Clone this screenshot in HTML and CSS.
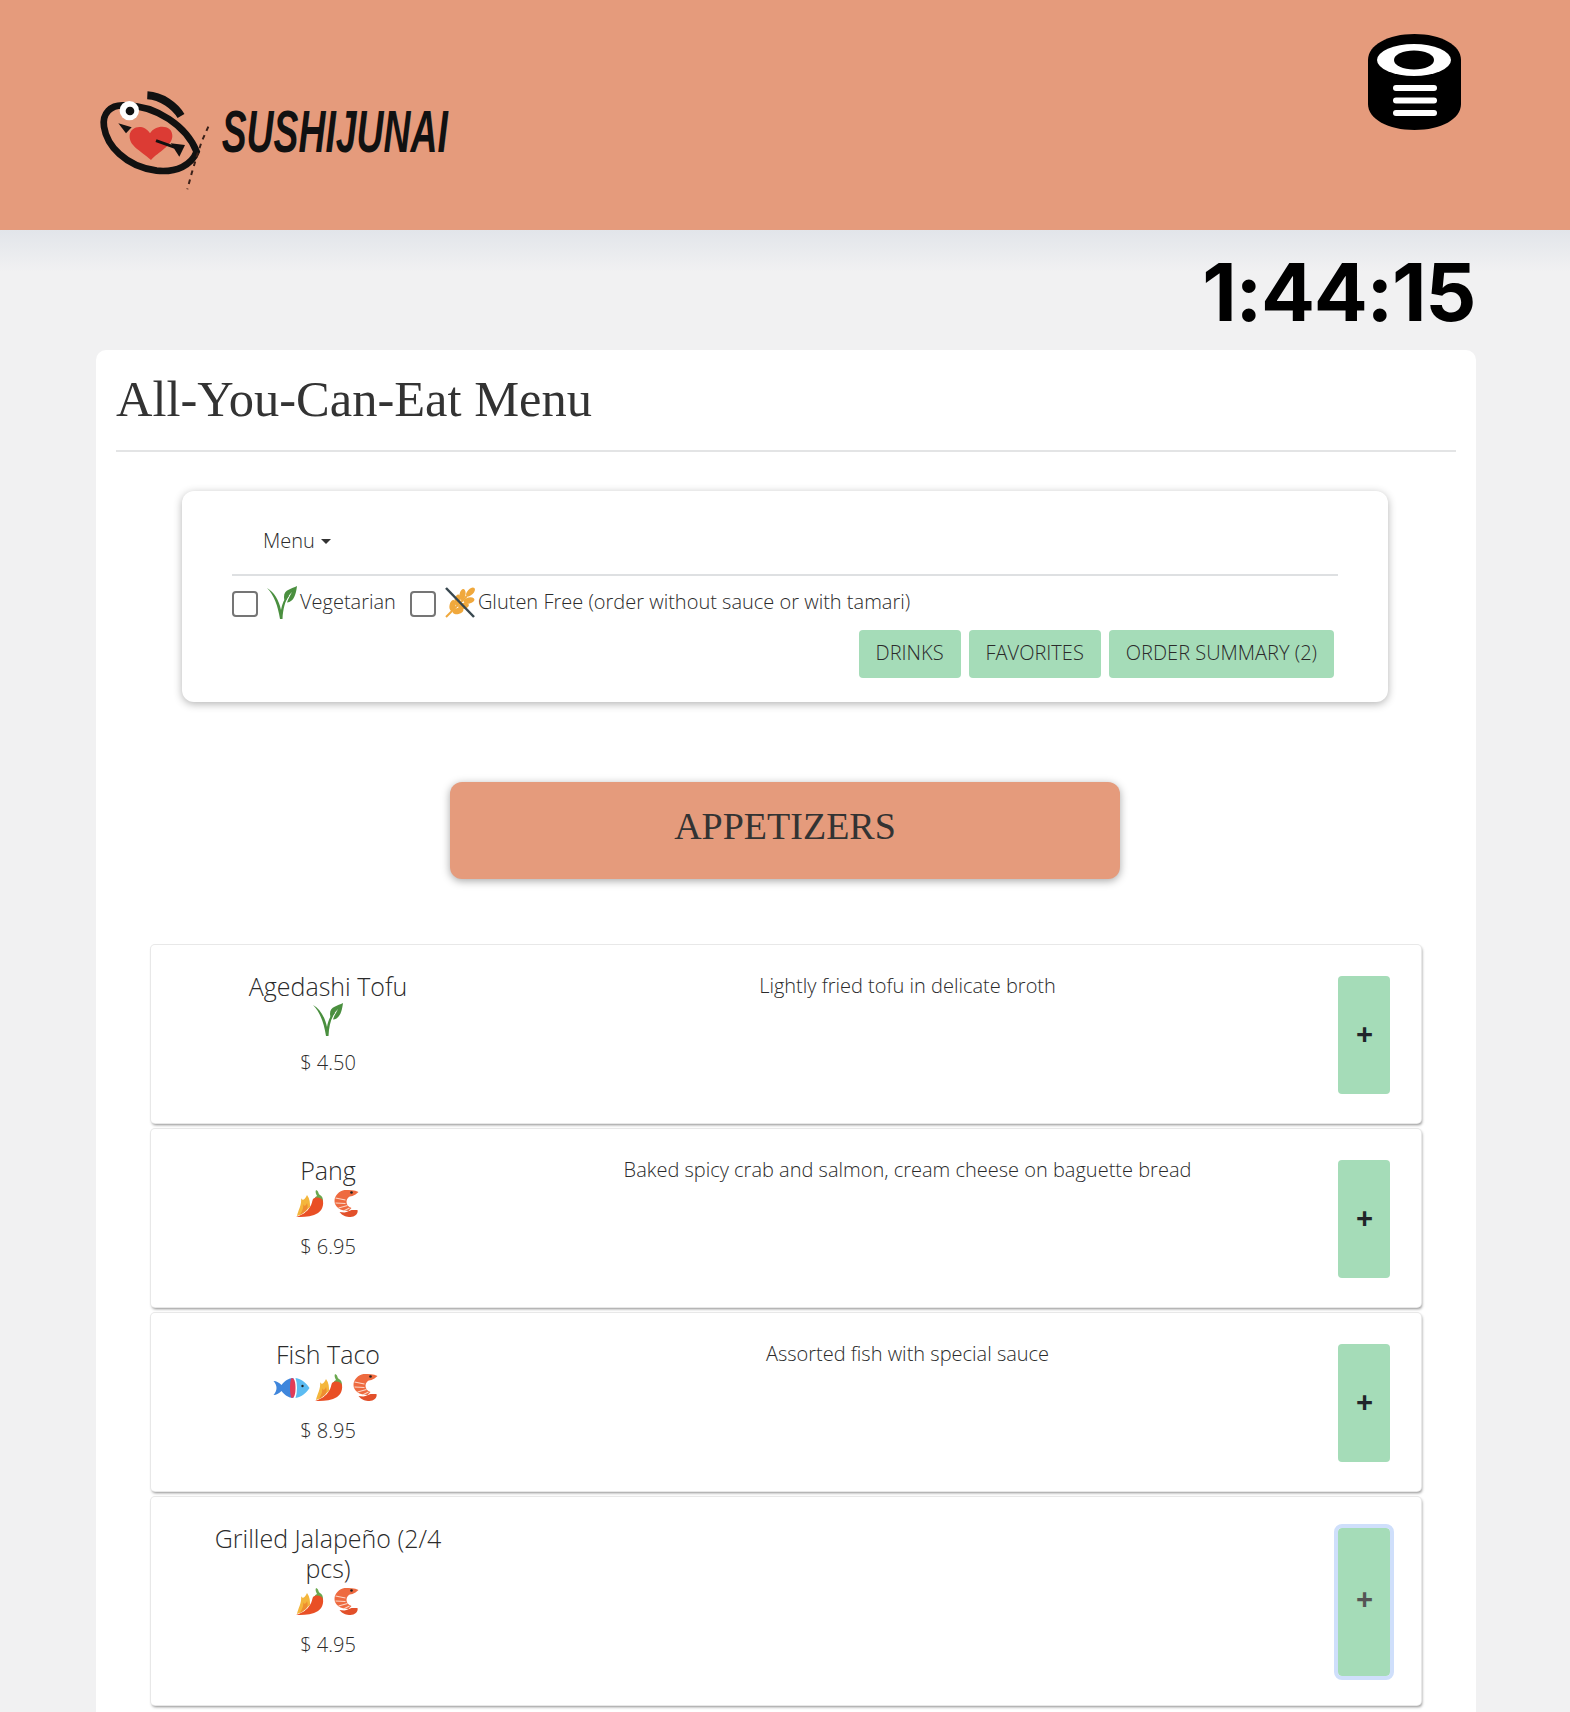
FILE: index.html
```html
<!DOCTYPE html>
<html lang="en">
<head>
<meta charset="utf-8">
<title>Sushi Junai Menu</title>
<link rel="stylesheet" href="styles.css">
</head>
<body>
<svg class="defs" width="0" height="0" aria-hidden="true">
  <symbol id="i-leaf" viewBox="0 0 30 33">
    <path fill="#4a8f3f" d="M0 2C7 6 12 14 14 24C15 18 17 13 21 9L22 10C18 15 16 23 15.500 33L13 33C11 20 7 9 0 2Z"/>
    <path fill="#4a8f3f" d="M30 0C25 3 17 3 17 11C17 13 17.500 14.500 18.500 15.500C20 12 22 9 25 6C23 10 21 13 20 16.500C27 16 29 8 30 0Z"/>
  </symbol>
  <symbol id="i-wheat" viewBox="0 0 30 31">
    <path stroke="#f0a83c" stroke-width="2" d="M1 30L22 9" fill="none"/>
    <g fill="#f0a83c">
      <ellipse cx="25.500" cy="5" rx="3" ry="5.500" transform="rotate(45 25.500 5)"/>
      <ellipse cx="17.500" cy="7.500" rx="3" ry="5.500" transform="rotate(12 17.500 7.500)"/>
      <ellipse cx="24" cy="13.500" rx="3" ry="5.500" transform="rotate(78 24 13.500)"/>
      <ellipse cx="12.500" cy="13" rx="3" ry="5.500" transform="rotate(12 12.500 13)"/>
      <ellipse cx="18.500" cy="19" rx="3" ry="5.500" transform="rotate(78 18.500 19)"/>
      <ellipse cx="7.500" cy="18.500" rx="3" ry="5.500" transform="rotate(12 7.500 18.500)"/>
      <ellipse cx="13" cy="24" rx="3" ry="5.500" transform="rotate(78 13 24)"/>
    </g>
    <path stroke="#38474f" stroke-width="2.500" d="M1 1L29 30" fill="none"/>
  </symbol>
  <symbol id="i-chili" viewBox="0 0 27 27">
    <path fill="#6aa84f" d="M20 0C23 1 22 4 24 5C26 6 27 8 27 11L19 10C18 8 19 7 21 6C20 4 19 2 20 0Z"/>
    <path fill="#f4b63c" d="M5 8C6 11 9 10 11 5C14 9 14 13 14 17L6 24L1 26C2 20 6 15 5 8Z"/>
    <path fill="#e94f25" d="M17 9C21 6 26 8 27 11C28 18 24 23 18 25C12 27 5 27 0 27C6 25 11 22 14 17C16 14 16 11 17 9Z"/>
    <path fill="#ee8d30" d="M7 14C8 17 10 16 11 13C12 16 12 19 10 21L4 25C6 21 8 18 7 14Z"/>
  </symbol>
  <symbol id="i-shrimp" viewBox="0 0 24 27">
    <path fill="#ee6a3f" d="M10 0C15 0 20 0 24 2C22 4 20 5 18 6C14 6 12 9 12 12C12 15 14 17 17 18L14 21C6 21 0 17 0 11C0 5 5 1 10 0Z"/>
    <path fill="#e2502a" d="M12 22L17 20L23 20C24 24 20 27 16 27C12 27 8 26 5 22C7 22 10 23 12 22Z"/>
    <circle cx="17" cy="2.500" r="1.300" fill="#222"/>
    <path d="M1 8L11 10M1 13L11 13.500M4 18L13 15.500M9 21L15 18" stroke="#fbd8c8" stroke-width="1.100" fill="none"/>
  </symbol>
  <symbol id="i-fish" viewBox="0 0 36 20">
    <path fill="#3f86dc" d="M0 3C3 3 6 5 8 7C11 3 15 0 20 0L20 20C15 20 11 17 8 13C6 15 3 17 0 17C2 15 3 12 3 10C3 8 2 5 0 3Z"/>
    <path fill="#e23b57" d="M18 0C21 0 22 4 22 10C22 16 21 20 18 20C16 17 16 3 18 0Z"/>
    <path fill="#5cbcf2" d="M22 0C28 1 33 5 36 10C33 15 28 19 22 20C24 14 24 6 22 0Z"/>
    <circle cx="29" cy="8" r="1.200" fill="#222"/>
  </symbol>
</svg>

<header class="site-header">
  <svg class="logo" viewBox="0 0 1200 390" role="img" aria-label="Sushi Junai logo">
    <path d="M132 106C92 104 66 130 72 170C80 225 135 290 230 302C290 308 335 285 350 245C320 170 230 105 132 106Z" fill="none" stroke="#111" stroke-width="20"/>
    <path d="M202 76C245 78 285 108 303 138" fill="none" stroke="#111" stroke-width="24"/>
    <path d="M385 170L365 215L350 260L335 310L322 358" fill="none" stroke="#3a2018" stroke-width="6" stroke-dasharray="14 14"/>
    <circle cx="148" cy="122" r="29" fill="#fff"/><circle cx="150" cy="123" r="13" fill="#111"/>
    <path d="M213 270C180 240 146 228 149 195C152 168 192 160 210 190C225 162 278 162 277 198C277 228 235 245 213 270Z" fill="#dc3b34"/>
    <path d="M228 212L285 232" stroke="#111" stroke-width="9"/>
    <path d="M272 220L315 225L298 260Z" fill="#111"/>
    <path d="M115 160L155 172L138 190Z" fill="#111"/>
    <text class="logo-text" transform="translate(425 246) scale(.64 1)">SUSHIJUNAI</text>
  </svg>
  <svg class="order-icon" viewBox="0 0 93 96" role="img" aria-label="Order">
    <path fill="#000" d="M0 26C0 11 20 0 46.500 0C73 0 93 11 93 26L93 70C93 85 73 96 46.500 96C20 96 0 85 0 70Z"/>
    <ellipse cx="46" cy="26" rx="37" ry="16" fill="#fff"/>
    <ellipse cx="46" cy="26" rx="20" ry="9.500" fill="#000"/>
    <rect x="25" y="51" width="44" height="6" rx="3" fill="#fff"/>
    <rect x="25" y="63.500" width="44" height="6" rx="3" fill="#fff"/>
    <rect x="25" y="76" width="44" height="6" rx="3" fill="#fff"/>
  </svg>
</header>

<div class="timer">1:44:15</div>

<main class="menu-card">
  <h1 class="page-title">All-You-Can-Eat Menu</h1>
  <hr class="rule">

  <section class="filters">
    <nav class="filter-nav"><span class="menu-toggle">Menu<i class="caret"></i></span></nav>
    <div class="check-row">
      <span class="check-box"></span>
      <svg class="icon-filter"><use href="#i-leaf"/></svg>
      <span class="check-label">Vegetarian</span>
      <span class="check-box second"></span>
      <svg class="icon-filter"><use href="#i-wheat"/></svg>
      <span class="check-label">Gluten Free (order without sauce or with tamari)</span>
    </div>
    <div class="filter-actions">
      <a class="btn">DRINKS</a>
      <a class="btn">FAVORITES</a>
      <a class="btn">ORDER SUMMARY (2)</a>
    </div>
  </section>

  <h2 class="section-title">APPETIZERS</h2>

  <div class="items">
    <article class="item">
      <div class="item-main">
        <div class="item-name">Agedashi Tofu</div>
        <div class="item-icons"><svg class="ic-leaf"><use href="#i-leaf"/></svg></div>
        <div class="item-price">$ 4.50</div>
      </div>
      <div class="item-desc">Lightly fried tofu in delicate broth</div>
      <button class="add">+</button>
    </article>
    <article class="item">
      <div class="item-main">
        <div class="item-name">Pang</div>
        <div class="item-icons"><svg class="ic-food"><use href="#i-chili"/></svg><svg class="ic-food"><use href="#i-shrimp"/></svg></div>
        <div class="item-price">$ 6.95</div>
      </div>
      <div class="item-desc">Baked spicy crab and salmon, cream cheese on baguette bread</div>
      <button class="add">+</button>
    </article>
    <article class="item">
      <div class="item-main">
        <div class="item-name">Fish Taco</div>
        <div class="item-icons"><svg class="ic-fish"><use href="#i-fish"/></svg><svg class="ic-food"><use href="#i-chili"/></svg><svg class="ic-food"><use href="#i-shrimp"/></svg></div>
        <div class="item-price">$ 8.95</div>
      </div>
      <div class="item-desc">Assorted fish with special sauce</div>
      <button class="add">+</button>
    </article>
    <article class="item tall">
      <div class="item-main">
        <div class="item-name">Grilled Jalapeño (2/4 pcs)</div>
        <div class="item-icons"><svg class="ic-food"><use href="#i-chili"/></svg><svg class="ic-food"><use href="#i-shrimp"/></svg></div>
        <div class="item-price">$ 4.95</div>
      </div>
      <div class="item-desc"></div>
      <button class="add focused">+</button>
    </article>
  </div>
</main>
</body>
</html>
```

FILE: styles.css
```css
html, body {
  margin: 0;
  height: 1712px;
  overflow: hidden;
}
body {
  background: #f1f1f2;
  color: #2b2b2b;
  font-family: "Open Sans", sans-serif;
  font-weight: 300;
}
.defs { display: block; height: 0; }

.site-header {
  height: 230px;
  box-sizing: border-box;
  background: #e59b7c;
  display: flex;
  justify-content: space-between;
  align-items: flex-start;
  padding: 34px 109px 0 80px;
}
.logo { width: 400px; height: 130px; margin-top: 36px; }
.logo-text {
  font-family: "Liberation Sans", sans-serif;
  font-weight: 700;
  font-style: italic;
  font-size: 175px;
  fill: #111;
}
.order-icon { width: 93px; height: 96px; }

.timer {
  height: 120px;
  box-sizing: border-box;
  padding: 15px 95px 0 0;
  background: linear-gradient(#e2e5ea, #f1f1f2 42px);
  text-align: right;
  font-family: Inter, sans-serif;
  font-weight: 700;
  font-size: 80px;
  letter-spacing: -1.300px;
  line-height: 94px;
  color: #000;
}

.menu-card {
  margin: 0 94px 0 96px;
  height: 1362px;
  box-sizing: border-box;
  background: #fff;
  border-radius: 10px 10px 0 0;
  padding: 21px 20px 0;
}
.page-title {
  margin: 0;
  font-family: "Liberation Serif", serif;
  font-weight: 400;
  font-size: 50.500px;
  line-height: 56px;
  color: #333;
}
.rule {
  margin: 23px 0 0;
  border: 0;
  border-top: 2px solid #e3e4e5;
}

.filters {
  margin: 39px 68px 0 66px;
  height: 211px;
  box-sizing: border-box;
  padding: 0 50px;
  background: #fff;
  border-radius: 12px;
  box-shadow: 0 2px 8px rgba(0, 0, 0, .3);
}
.filter-nav {
  height: 85px;
  box-sizing: border-box;
  padding: 36px 0 0 31px;
  border-bottom: 2px solid #dee0e2;
  font-size: 20px;
  line-height: 28px;
}
.menu-toggle { display: inline-flex; align-items: center; }
.caret {
  margin-left: 6px;
  border-top: 5.500px solid #333;
  border-left: 5.500px solid transparent;
  border-right: 5.500px solid transparent;
}
.check-row {
  display: flex;
  align-items: center;
  margin-top: 8px;
  height: 34px;
  font-size: 20px;
}
.check-box {
  width: 26px;
  height: 26px;
  box-sizing: border-box;
  margin-top: 5px;
  border: 2px solid #757575;
  border-radius: 4px;
}
.check-box.second { margin-left: 14px; }
.icon-filter { width: 30px; height: 33px; margin: 2px 3px 0 9px; }
.filter-actions {
  display: flex;
  justify-content: flex-end;
  gap: 8px;
  margin: 12px 4px 0 0;
}
.btn {
  height: 48px;
  box-sizing: border-box;
  padding: 0 17px 3px;
  display: flex;
  align-items: center;
  background: #a5dcb8;
  border-radius: 4px;
  font-size: 20px;
  color: #2b2b2b;
}

.section-title {
  margin: 80px 0 0 334px;
  width: 670px;
  height: 97px;
  background: #e59b7c;
  border-radius: 12px;
  box-shadow: 0 2px 8px rgba(0, 0, 0, .35);
  text-align: center;
  font-family: "Liberation Serif", serif;
  font-weight: 400;
  font-size: 38px;
  line-height: 88px;
  color: #333;
}

.items {
  margin: 66px 35px 0;
  display: flex;
  flex-direction: column;
  gap: 6px;
}
.item {
  height: 178px;
  box-sizing: border-box;
  background: #fff;
  border-radius: 4px;
  box-shadow: 0 0 0 1px #e8e8e8, 1px 2px 3px rgba(0, 0, 0, .45);
  padding: 26px 31px 0 8px;
  display: grid;
  grid-template-columns: 340px 1fr 52px;
  align-items: start;
}
.item.tall { height: 208px; }
.item-main {
  padding: 0 41px 0 39px;
  text-align: center;
}
.item-name {
  font-size: 25px;
  line-height: 30px;
}
.item-icons {
  display: flex;
  justify-content: center;
  align-items: center;
  height: 37px;
}
.ic-leaf { width: 30px; height: 33px; }
.ic-food { width: 37px; height: 27px; }
.ic-fish { width: 37px; height: 20px; }
.item-price {
  margin-top: 13px;
  font-size: 20px;
  line-height: 24px;
}
.item-desc {
  font-size: 20px;
  line-height: 30px;
  text-align: center;
  padding-right: 22px;
}
.add {
  width: 52px;
  height: 118px;
  margin-top: 5px;
  padding: 0 0 4px 1px;
  border: 0;
  border-radius: 4px;
  background: #a5dcb8;
  font-family: "Open Sans", sans-serif;
  font-weight: 700;
  font-size: 30px;
  color: #212529;
}
.add.focused {
  height: 148px;
  padding-bottom: 8px;
  color: #555;
  outline: 4px solid #cfdffb;
}
```
